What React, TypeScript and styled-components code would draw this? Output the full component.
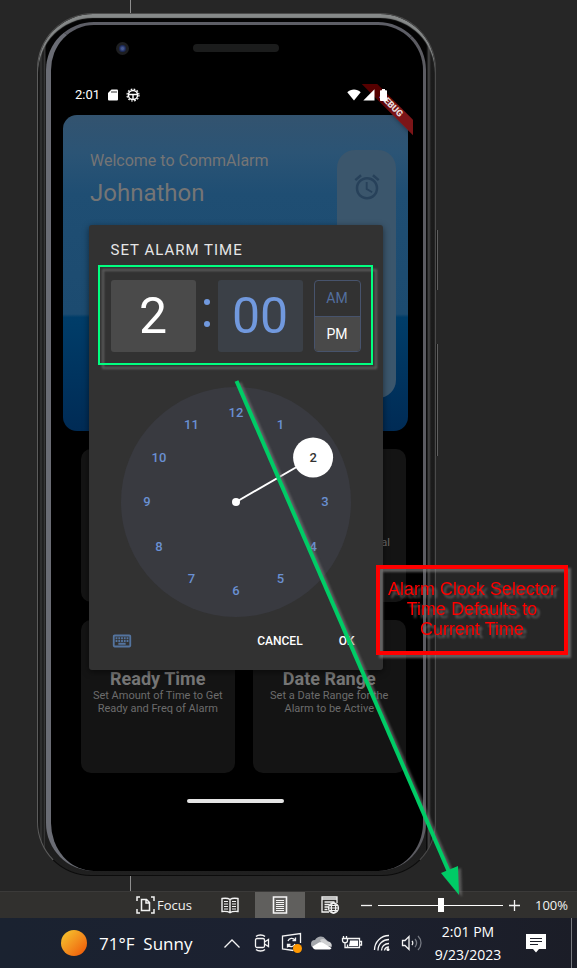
import React, { useState } from 'react';
import styled, { createGlobalStyle } from 'styled-components';
import { MdAccessAlarm, MdOutlineKeyboard } from 'react-icons/md';

const GlobalStyle = createGlobalStyle`
  *, *::before, *::after { box-sizing: border-box; }
  body { margin: 0; background: #262626; font-family: Roboto, sans-serif; }
  button { font: inherit; color: inherit; background: none; border: 0; padding: 0; margin: 0; cursor: pointer; }
  h1, h2, p { margin: 0; font-weight: 400; }
  svg { display: block; flex: none; }
`;

const Page = styled.div`
  display: flex;
  flex-direction: column;
  min-height: 100vh;
`;

const Workspace = styled.main`
  position: relative;
  flex: 1;
  padding: 13px 16px 15px 37px;
  background: linear-gradient(#8e8e8e, #8e8e8e) 130px 0 / 1px 100% no-repeat #262626;
`;

/* ---------- phone ---------- */

const Phone = styled.div`
  position: relative;
  width: 100%;
  max-width: 399px;
  padding: 8px 9px 4px 8px;
  border-style: solid;
  border-width: 1px;
  border-color: #4c4c4c #4a4a4a #0c0c0c #5c5c5c;
  border-radius: 56px 56px 54px 54px;
  box-shadow: inset 0 4px 1px #868989;
  background:
    linear-gradient(to right, #0a0a0a 1px, #2e2e2e 2px, #2e2e2e 4px, #101010 5px, #353535 6px, #353535 7px, #060606 8px) left / 8px 100% no-repeat,
    linear-gradient(to left, #1a1a1a 1px, #1c1c1c 4px, #444 6px, #3a3a3a 7px, #0a0a0a 8px) right / 9px 100% no-repeat,
    linear-gradient(#030303, #030303 60%, #202020);
`;

const SideKey = styled.span<{ $top: number; $length: number }>`
  position: absolute;
  right: -3px;
  top: ${(p) => p.$top}px;
  width: 2px;
  height: ${(p) => p.$length}px;
  border-right: 1px solid #5e5e5e;
  background: #161616;
`;

const Bezel = styled.div`
  padding: 0 10px 60px 7px;
  border-style: solid;
  border-width: 3px 3px 0 5px;
  border-color: #5d5e66 #5c5c62 #000 #6a6c74;
  border-radius: 48px;
  background: #000;
`;

const Earpiece = styled.div`
  display: grid;
  grid-template-columns: 1fr 86px 1fr;
  align-items: center;
  height: 59px;
  padding-bottom: 13px;
`;

const Camera = styled.span`
  justify-self: center;
  width: 13px;
  height: 13px;
  margin-right: 6px;
  border-radius: 50%;
  border: 3px solid #1d1e20;
  background: radial-gradient(#46598f 0 1px, #1d2a5a 3px);
`;

const Speaker = styled.span`
  height: 8px;
  border-radius: 4px;
  background: #1b1c1c;
`;

const Screen = styled.section`
  position: relative;
  display: flex;
  flex-direction: column;
  min-height: 727px;
  padding-bottom: 8px;
  color: #757575;
`;

const SystemBar = styled.div`
  position: relative;
  z-index: 1;
  display: flex;
  align-items: center;
  gap: 7px;
  height: 31px;
  padding: 0 24px 10px 17px;
  color: #fff;
  font-size: 13px;
`;

const SystemIcons = styled.span`
  display: flex;
  align-items: center;
  gap: 2px;
  margin-left: auto;
`;

const BannerCorner = styled.div`
  position: absolute;
  top: 0;
  right: 0;
  width: 60px;
  height: 60px;
  overflow: hidden;
`;

const Banner = styled.span`
  position: absolute;
  top: 16px;
  right: -18px;
  width: 80px;
  height: 11px;
  transform: rotate(45deg);
  background: linear-gradient(to right, #560000 38%, #7c1518 60%);
  box-shadow: 0 0 5px rgba(0, 0, 0, 0.4);
  color: #e8dcdc;
  font-size: 9px;
  font-weight: 900;
  line-height: 11px;
  text-align: center;
`;

const WelcomeCard = styled.header`
  display: flex;
  justify-content: space-between;
  min-height: 316px;
  margin: 0 5px;
  padding: 35px 12px 33px 27px;
  border-radius: 14px;
  background: linear-gradient(#33536f, #2b5475 12%, #1f4e73 25%, #1c4b70 63%, #003d69 64%, #002b55);
`;

const Greeting = styled.p`
  font-size: 16px;
  line-height: 22px;
`;

const UserName = styled.h1`
  font-size: 24px;
  line-height: 42px;
`;

const AlarmRail = styled.div`
  display: flex;
  justify-content: center;
  width: 59px;
  padding-top: 22px;
  border-radius: 18px;
  background: #3b566c;
  color: #27415a;
`;

const Tiles = styled.div`
  display: grid;
  grid-template-columns: 1fr 1fr;
  grid-auto-rows: minmax(153px, auto);
  gap: 18px;
  margin: 18px 7px 0 23px;
`;

const Tile = styled.article`
  padding-top: 49px;
  border-radius: 10px;
  background: #141414;
  text-align: center;
`;

const TileTitle = styled.h2`
  font-size: 18px;
  font-weight: 700;
  line-height: 20px;
`;

const TileText = styled.p`
  font-size: 11px;
  line-height: 13px;
  color: #6c6c6c;
`;

const TileTail = styled(TileText)`
  padding: 38px 16px 0 0;
  text-align: right;
`;

const HomeHandle = styled.span`
  width: 97px;
  height: 4px;
  margin: auto auto 0;
  border-radius: 2px;
  background: #e4e4e4;
`;

/* ---------- time picker ---------- */

const Scrim = styled.div`
  position: absolute;
  inset: 0;
  z-index: 2;
  display: flex;
  align-items: center;
  justify-content: center;
`;

const Dialog = styled.div`
  width: 294px;
  padding: 14px 22px 19px;
  border-radius: 3px;
  background: #323232;
  box-shadow: 0 2px 6px rgba(0, 0, 0, 0.5);
  color: #fff;
`;

const DialogTitle = styled.h2`
  color: #e6e6e6;
  font-size: 15px;
  line-height: 22px;
  letter-spacing: 1px;
`;

const TimeRow = styled.div`
  display: flex;
  height: 72px;
  margin-top: 19px;
`;

const TimeField = styled.button<{ $active?: boolean }>`
  flex: 1;
  border-radius: 3px;
  background: ${(p) => (p.$active ? '#4a4a4a' : '#3b4047')};
  color: ${(p) => (p.$active ? '#fff' : '#7199de')};
  font-size: 50px;
  line-height: 72px;
`;

const Colon = styled.span`
  display: flex;
  flex-direction: column;
  align-items: center;
  justify-content: center;
  gap: 16px;
  width: 22px;
  padding-bottom: 6px;
`;

const ColonDot = styled.i`
  width: 6px;
  height: 6px;
  border-radius: 50%;
  background: #7199de;
`;

const Period = styled.div`
  display: flex;
  flex-direction: column;
  width: 47px;
  margin-left: 11px;
  overflow: hidden;
  border: 1px solid #47536c;
  border-radius: 4px;
`;

const PeriodOption = styled.button<{ $active: boolean }>`
  flex: 1;
  background: ${(p) => (p.$active ? '#494949' : 'transparent')};
  color: ${(p) => (p.$active ? '#fff' : '#536f9f')};
  font-size: 14px;

  & + & { border-top: 1px solid #47536c; }
`;

const Dial = styled.svg`
  width: 230px;
  height: 230px;
  margin: 35px auto 0;
  font-size: 13px;
  font-weight: 500;
  text-anchor: middle;
`;

const Actions = styled.div`
  display: flex;
  align-items: center;
  height: 20px;
  margin-top: 14px;
  font-size: 12px;
  font-weight: 500;
`;

const InputModeButton = styled.button`
  margin-right: auto;
  color: #54749f;
`;

const ActionButton = styled.button`
  padding: 0 6px;
  margin-left: 24px;
`;

/* ---------- annotations ---------- */

const Highlight = styled.div`
  position: absolute;
  top: 265px;
  left: 98px;
  z-index: 3;
  width: 275px;
  height: 100px;
  border: 2px solid #00ff80;
  filter: drop-shadow(4px 4px 1px rgba(120, 120, 120, 0.65));
  pointer-events: none;
`;

const Arrow = styled.svg`
  position: absolute;
  top: 370px;
  left: 226px;
  z-index: 5;
  filter: drop-shadow(3px 2px 1px rgba(130, 130, 130, 0.55));
  pointer-events: none;
`;

const Note = styled.p`
  position: absolute;
  top: 565px;
  left: 376px;
  z-index: 4;
  width: 192px;
  padding: 10px 0 12px;
  border: 4px solid #f00;
  color: #f00;
  font: 18px/20px "Liberation Sans", Arial, sans-serif;
  text-align: center;
  filter: drop-shadow(3px 3px 1px rgba(130, 130, 130, 0.65));
`;

/* ---------- document status bar ---------- */

const StatusBar = styled.footer`
  display: flex;
  justify-content: flex-end;
  height: 27px;
  border-top: 1px solid #3b3a39;
  background: #31302e;
  color: #f2f2f2;
  font: 13px "Open Sans", sans-serif;
`;

const ViewButton = styled.button<{ $active?: boolean }>`
  display: grid;
  place-items: center;
  width: 50px;
  background: ${(p) => (p.$active ? '#605f5d' : 'transparent')};
`;

const FocusButton = styled.button`
  display: flex;
  align-items: center;
  gap: 2px;
  width: 69px;
`;

const StepButton = styled.button`
  display: grid;
  place-items: center;
  width: 23px;
`;

const ZoomRange = styled.input`
  appearance: none;
  width: 125px;
  height: 26px;
  margin: 0;
  background: linear-gradient(#fff, #fff) center / 100% 1px no-repeat;

  &::-webkit-slider-thumb {
    appearance: none;
    width: 6px;
    height: 14px;
    background: #fff;
  }
`;

const ZoomLevel = styled.button`
  width: 51px;
`;

/* ---------- taskbar ---------- */

const Taskbar = styled.footer`
  display: flex;
  justify-content: flex-end;
  height: 50px;
  background: linear-gradient(to right, #1a2230, #1c2130 50%, #1b1d27);
  color: #fff;
  font-family: "Open Sans", sans-serif;
`;

const Weather = styled.button`
  display: flex;
  align-items: center;
  gap: 12px;
  width: 156px;
  font-size: 17px;
  white-space: pre;
`;

const Sun = styled.span`
  width: 26px;
  height: 26px;
  border-radius: 50%;
  background: linear-gradient(135deg, #f5bf2c 10%, #f28a1c 55%, #f0640c 85%);
`;

const TrayButton = styled.button<{ $wide?: boolean }>`
  display: grid;
  place-items: center;
  width: ${(p) => (p.$wide ? 54 : 30)}px;
`;

const Clock = styled.button`
  width: 82px;
  font-size: 14px;
  line-height: 23px;
`;

const ShowDesktop = styled.button`
  width: 6px;
  margin-left: 8px;
  border-left: 1px solid #777a80;
`;

/* ---------- icons ---------- */

const SdCard = () => (
  <svg width="12" height="12" viewBox="0 0 12 12" aria-hidden="true">
    <path d="M4.5 0.5H10a1 1 0 0 1 1 1v9a1 1 0 0 1-1 1H2a1 1 0 0 1-1-1V4z" fill="#fff" />
    <path d="M5 2v2M7 2v2M9 2v2" stroke="#333" />
  </svg>
);

const GearMark = () => (
  <svg width="14" height="14" viewBox="0 0 14 14" fill="none" stroke="#fff" aria-hidden="true">
    <circle cx="7" cy="7" r="4.6" strokeWidth="1.5" />
    <circle cx="7" cy="7" r="6" strokeWidth="1.2" strokeDasharray="1.7 1.44" />
    <path d="M2.5 6.5h9M7 7v4.5" strokeWidth="1.4" />
  </svg>
);

const WifiFull = () => (
  <svg width="14" height="12" viewBox="0 0 14 12" fill="#fff" aria-hidden="true">
    <path d="M0.3 3.2C4-.4 10-.4 13.7 3.2L7 11.6z" />
  </svg>
);

const SignalFull = () => (
  <svg width="12" height="12" viewBox="0 0 12 12" fill="#fff" aria-hidden="true">
    <path d="M11.5 0.3v11.2H0.3z" />
  </svg>
);

const BatteryFull = () => (
  <svg width="12" height="12" viewBox="0 0 12 12" fill="#fff" aria-hidden="true">
    <path d="M5 0h3v1.2h1.200a.8.8 0 0 1 .8.8v9.200a.8.8 0 0 1-.8.8H3.800a.8.8 0 0 1-.8-.8V2a.8.8 0 0 1 .8-.8H5z" />
  </svg>
);

const FocusIcon = () => (
  <svg width="19" height="18" viewBox="0 0 19 18" fill="none" stroke="#f2f2f2" strokeWidth="1.5" aria-hidden="true">
    <path d="M4 1H1v4M15 1h3v4M4 17H1v-4M15 17h3v-4" />
    <path d="M5.5 3.5h5l3 3v8h-8zM10 3.5V7h3.5" />
  </svg>
);

const ReadIcon = () => (
  <svg width="18" height="17" viewBox="0 0 18 17" fill="none" stroke="#f2f2f2" strokeWidth="1.4" aria-hidden="true">
    <path d="M9 2.5C7 1 4 1 1 1.5v13c3-.3 6-.3 8 1.200 2-1.500 5-1.500 8-1.200v-13C14 1 11 1 9 2.500zM9 2.500v13" />
    <path d="M3 4.500h4M3 7h4M3 9.500h4M3 12h4M11 4.500h4M11 7h4M11 9.500h4M11 12h4" strokeWidth="1.200" />
  </svg>
);

const PrintIcon = () => (
  <svg width="16" height="18" viewBox="0 0 16 18" fill="none" stroke="#f5f5f5" aria-hidden="true">
    <path d="M1.500 1h13v16h-13z" strokeWidth="1.600" />
    <path d="M4 4.500h8M4 6.500h8M4 8.500h8M4 10.500h8M4 12.500h8M4 14.500h8" />
  </svg>
);

const WebIcon = () => (
  <svg width="19" height="18" viewBox="0 0 19 18" fill="none" stroke="#f2f2f2" strokeWidth="1.300" aria-hidden="true">
    <path d="M8 16H1V1h15v6M1 3h15M3.500 6h10M3.500 8.500h5M3.500 11h3.500M3.500 13.500h3" />
    <circle cx="12.500" cy="12" r="5" fill="#31302e" />
    <ellipse cx="12.500" cy="12" rx="2.200" ry="5" />
    <path d="M7.500 12h10M8.500 9.500h8M8.500 14.500h8" strokeWidth="1" />
  </svg>
);

const Stroke = styled.svg`
  fill: none;
  stroke: #f4f4f4;
  stroke-width: 1.3;
`;

function ClockDial({ hour, onPick }: { hour: number; onPick: (h: number) => void }) {
  const at = (h: number, r: number) => {
    const a = (h * Math.PI) / 6;
    return [115 + r * Math.sin(a), 115 - r * Math.cos(a)];
  };
  const [hx, hy] = at(hour, 89);
  return (
    <Dial viewBox="0 0 230 230" role="group" aria-label="Hour">
      <circle cx="115" cy="115" r="115" fill="#393a40" />
      <line x1="115" y1="115" x2={hx} y2={hy} stroke="#fff" strokeWidth="2" />
      <circle cx="115" cy="115" r="4" fill="#fff" />
      <circle cx={hx} cy={hy} r="20" fill="#fff" />
      {Array.from({ length: 12 }, (_, i) => i + 1).map((h) => {
        const [x, y] = at(h, 89);
        return (
          <text key={h} x={x} y={y + 4} fill={h === hour ? '#333' : '#6a90d2'} onClick={() => onPick(h)}>
            {h}
          </text>
        );
      })}
    </Dial>
  );
}

function TimePicker() {
  const [hour, setHour] = useState(2);
  const [period, setPeriod] = useState('PM');
  return (
    <Scrim>
      <Dialog role="dialog" aria-labelledby="picker-title">
        <DialogTitle id="picker-title">SET ALARM TIME</DialogTitle>
        <TimeRow>
          <TimeField $active>{hour}</TimeField>
          <Colon>
            <ColonDot />
            <ColonDot />
          </Colon>
          <TimeField>00</TimeField>
          <Period>
            {['AM', 'PM'].map((p) => (
              <PeriodOption key={p} $active={p === period} onClick={() => setPeriod(p)}>
                {p}
              </PeriodOption>
            ))}
          </Period>
        </TimeRow>
        <ClockDial hour={hour} onPick={setHour} />
        <Actions>
          <InputModeButton aria-label="Switch to text input">
            <MdOutlineKeyboard size={22} />
          </InputModeButton>
          <ActionButton>CANCEL</ActionButton>
          <ActionButton>OK</ActionButton>
        </Actions>
      </Dialog>
    </Scrim>
  );
}

function AlarmPhone() {
  return (
    <Phone>
      <SideKey $top={216} $length={60} />
      <SideKey $top={330} $length={112} />
      <Bezel>
        <Earpiece>
          <Camera />
          <Speaker />
        </Earpiece>
        <Screen>
          <SystemBar>
            <span>2:01</span>
            <SdCard />
            <GearMark />
            <SystemIcons>
              <WifiFull />
              <SignalFull />
              <BatteryFull />
            </SystemIcons>
          </SystemBar>
          <WelcomeCard>
            <div>
              <Greeting>Welcome to CommAlarm</Greeting>
              <UserName>Johnathon</UserName>
            </div>
            <AlarmRail>
              <MdAccessAlarm size={30} />
            </AlarmRail>
          </WelcomeCard>
          <Tiles>
            <Tile />
            <Tile>
              <TileTail>al</TileTail>
            </Tile>
            <Tile>
              <TileTitle>Ready Time</TileTitle>
              <TileText>Set Amount of Time to Get<br />Ready and Freq of Alarm</TileText>
            </Tile>
            <Tile>
              <TileTitle>Date Range</TileTitle>
              <TileText>Set a Date Range for the<br />Alarm to be Active</TileText>
            </Tile>
          </Tiles>
          <HomeHandle />
          <BannerCorner>
            <Banner>DEBUG</Banner>
          </BannerCorner>
          <TimePicker />
        </Screen>
      </Bezel>
    </Phone>
  );
}

function DocumentStatus() {
  const [zoom, setZoom] = useState(100);
  return (
    <StatusBar>
      <FocusButton>
        <FocusIcon />
        Focus
      </FocusButton>
      <ViewButton aria-label="Read mode"><ReadIcon /></ViewButton>
      <ViewButton $active aria-label="Print layout"><PrintIcon /></ViewButton>
      <ViewButton aria-label="Web layout"><WebIcon /></ViewButton>
      <StepButton aria-label="Zoom out" onClick={() => setZoom(zoom - 10)}>
        <Stroke width="11" height="11" viewBox="0 0 11 11"><path d="M0 5.500h11" /></Stroke>
      </StepButton>
      <ZoomRange
        type="range"
        min={0}
        max={200}
        value={zoom}
        aria-label="Zoom"
        onChange={(e) => setZoom(Number(e.target.value))}
      />
      <StepButton aria-label="Zoom in" onClick={() => setZoom(zoom + 10)}>
        <Stroke width="11" height="11" viewBox="0 0 11 11"><path d="M0 5.500h11M5.500 0v11" /></Stroke>
      </StepButton>
      <ZoomLevel>{zoom}%</ZoomLevel>
    </StatusBar>
  );
}

function DesktopTaskbar() {
  return (
    <Taskbar>
      <Weather>
        <Sun />
        {'71°F  Sunny'}
      </Weather>
      <TrayButton aria-label="Show hidden icons">
        <Stroke width="18" height="11" viewBox="0 0 18 11"><path d="M1.500 9.500L9 2l7.500 7.500" /></Stroke>
      </TrayButton>
      <TrayButton aria-label="Camera in use">
        <Stroke width="16" height="18" viewBox="0 0 16 18">
          <rect x="1.500" y="4.500" width="9" height="9" rx="1.500" />
          <path d="M10.500 8l4-2.500v7L10.500 10M2 2.500C4 .5 9 .5 11 2.500M2 15.500c2 2 7 2 9 0" />
        </Stroke>
      </TrayButton>
      <TrayButton aria-label="Update available">
        <Stroke width="22" height="22" viewBox="0 0 22 22">
          <path d="M19.500 11V1.500L1.500 4v13l11 1.500" />
          <path d="M7 9c1-3 5-3.500 7-1M14.500 5.500v3h-3M14 12c-1 3-5 3.500-7 1M6.500 15.500v-3h3" />
          <circle cx="16.500" cy="16.500" r="4.500" fill="#ff9800" stroke="none" />
        </Stroke>
      </TrayButton>
      <TrayButton aria-label="OneDrive">
        <svg width="22" height="16" viewBox="0 0 22 16">
          <path d="M4 13a4 4 0 0 1 0-8C6 1 12 0 14.500 4L19 8l-8 6z" fill="#a4a7ac" />
          <path d="M9 5c3-2 6-1 7 1.500 4-.5 5.500 3 4.500 5.500L12 10z" fill="#cfd0d2" />
          <path d="M1.500 11.500L8 7.500c2-.8 4 0 5 1l7.500 4.500c-.5 1-1.500 1.500-2.500 1.500H4.500c-1.500 0-2.500-1-3-3z" fill="#fff" />
        </svg>
      </TrayButton>
      <TrayButton aria-label="Battery charging">
        <Stroke width="22" height="16" viewBox="0 0 22 16">
          <path d="M6.500 3.500h12v9h-12v-3M18.500 6.500h2v3.500h-2M2.500 1v2M5.500 1v2M1.500 3.500h5v2c0 3-5 3-5 0zM4 8v4.500h2.500" />
          <path d="M9 5.500h8v5.500H8z" fill="#fff" stroke="none" />
        </Stroke>
      </TrayButton>
      <TrayButton aria-label="Wi-Fi">
        <Stroke width="18" height="18" viewBox="0 0 18 18">
          <path d="M1.500 16C1.500 8 8 1.500 16 1.500M5 16.500C5 10 10 5.500 16 5.500M8.500 16.500c0-4 3-7 7.500-7M11.500 16.500c.3-2 2-3.500 4.500-3.500" />
          <circle cx="15" cy="15.500" r="1.500" fill="#fff" stroke="none" />
        </Stroke>
      </TrayButton>
      <TrayButton aria-label="Volume">
        <Stroke width="22" height="18" viewBox="0 0 22 18">
          <path d="M1.500 6.500h2.500l4-4v13l-4-4H1.500zM11 7c1 1 1 3 0 4" />
          <path d="M14 5c2 2.500 2 5.500 0 8M17 2c4 4 4 10 0 14" stroke="#767a83" />
        </Stroke>
      </TrayButton>
      <Clock>2:01 PM<br />9/23/2023</Clock>
      <TrayButton $wide aria-label="Notifications">
        <svg width="20" height="20" viewBox="0 0 20 20">
          <path d="M0 1h20v15h-7l-3 3.500L7 16H0z" fill="#fff" />
          <path d="M4 5.500h12M4 8.500h12M4 11.500h8" stroke="#1b1d27" strokeWidth="1.200" />
        </svg>
      </TrayButton>
      <ShowDesktop aria-label="Show desktop" />
    </Taskbar>
  );
}

export default function App() {
  return (
    <Page>
      <GlobalStyle />
      <Workspace>
        <AlarmPhone />
        <Highlight />
        <Note>Alarm Clock Selector<br />Time Defaults to<br />Current Time</Note>
        <Arrow width="246" height="528" viewBox="0 0 246 528" aria-hidden="true">
          <path d="M10.500 11L223 502" stroke="#00cc66" strokeWidth="4" />
          <path d="M233 525L215 503l17-7z" fill="#00cc66" />
        </Arrow>
      </Workspace>
      <DocumentStatus />
      <DesktopTaskbar />
    </Page>
  );
}
